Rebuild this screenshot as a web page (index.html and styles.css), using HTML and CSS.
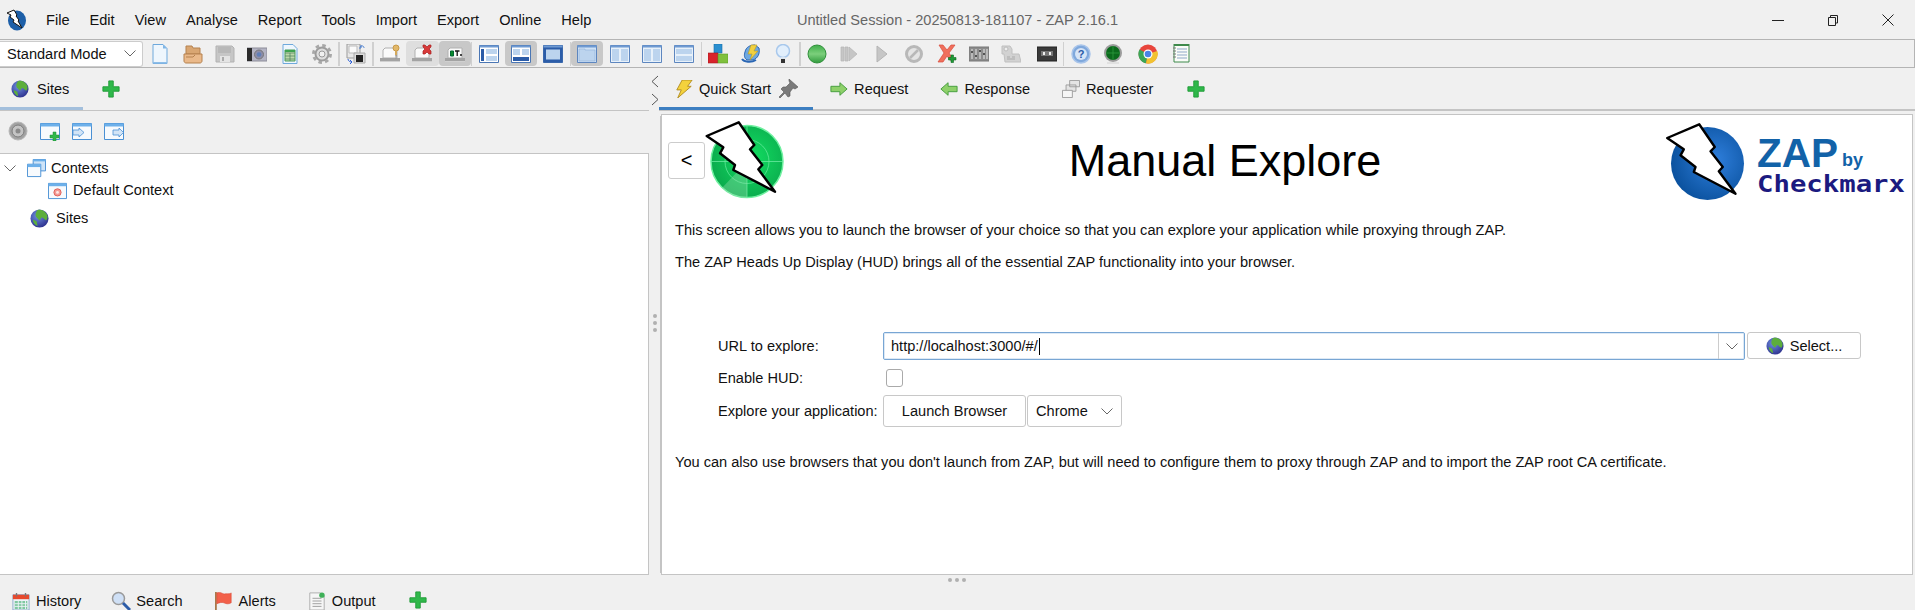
FILE: index.html
```html
<!DOCTYPE html>
<html lang="en">
<head>
    <meta charset="UTF-8">
    <title>Untitled Session - 20250813-181107 - ZAP 2.16.1</title>
    <link rel="stylesheet" href="styles.css">
</head>
<body>
    <!-- icon sprite, everything below points at these with <use> -->
    <svg class="sprites" xmlns="http://www.w3.org/2000/svg">
        <defs>
            <radialGradient id="g-globe" cx="40%" cy="35%" r="70%"><stop offset="0" stop-color="#6f8fe0"/><stop offset="1" stop-color="#2c2f8c"/></radialGradient>
            <radialGradient id="g-radar" cx="55%" cy="45%" r="60%"><stop offset="0" stop-color="#12df62"/><stop offset="1" stop-color="#0aa84c"/></radialGradient>
            <radialGradient id="g-zap" cx="60%" cy="45%" r="60%"><stop offset="0" stop-color="#2f7fdc"/><stop offset="1" stop-color="#0b529f"/></radialGradient>
            <linearGradient id="g-green" x1="0" y1="0" x2="0" y2="1"><stop offset="0" stop-color="#3fae4a"/><stop offset=".5" stop-color="#7ccf7c"/><stop offset="1" stop-color="#2f9a3c"/></linearGradient>
        </defs>
        <symbol id="plus" viewBox="0 0 20 20"><path d="M7.500 1h5v6.500H19v5h-6.500V19h-5v-6.500H1v-5h6.500z" fill="#2fb84a" stroke="#1f9a38"/></symbol>
        <symbol id="globe" viewBox="0 0 20 20"><circle cx="10" cy="10" r="9.500" fill="url(#g-globe)"/><path d="M8 1c4-1 8 1 10 5 1 3 0 5-1 6-2-1-3-3-5-3l-2 3-3-3C5 7 6 3 8 1zM3 11l4 2 1 5c-3-1-5-4-5-7z" fill="#5cae3c"/></symbol>
        <symbol id="new" viewBox="0 0 20 20"><path d="M3 .5h10l4 4v15H3z" fill="#eef6fd" stroke="#6ea9dc"/><path d="M13 .5v4h4z" fill="#7fb6e6"/><path d="M3 18h14v1.500H3z" fill="#8dbde8"/></symbol>
        <symbol id="open" viewBox="0 0 20 20"><path d="M3 2h6l1 2h7v6H3z" fill="#d9a672" stroke="#b5814e"/><path d="M1 10h18v7c0 1-1 2-2 2H3c-1 0-2-1-2-2z" fill="#eab98a" stroke="#b5814e"/><path d="M3 13h7l2-2" fill="none" stroke="#b5814e"/></symbol>
        <symbol id="save" viewBox="0 0 20 20"><path d="M1 2h16l2 2v14H1z" fill="#c6c6c6" stroke="#b2b2b2"/><path d="M3 3h13v6H3z" fill="#b8b8b8"/><path d="M5 12h10v6H5z" fill="#e4e4e4"/><path d="M7 13h2v4H7z" fill="#aaa"/></symbol>
        <symbol id="camera" viewBox="0 0 20 20"><path d="M0 4h20v13H0z" fill="#b4b4c4" stroke="#8c8c98"/><path d="M0 4h5v13H0z" fill="#2b2b2b"/><circle cx="12" cy="10.500" r="4.500" fill="#8c8ca8" stroke="#777"/><circle cx="12" cy="10.500" r="2.300" fill="#5f7fb8"/></symbol>
        <symbol id="report" viewBox="0 0 20 20"><path d="M3 .5h10l4 4v15H3z" fill="#eef6fd" stroke="#6ea9dc"/><path d="M5 6h10v11H5z" fill="#bcd8a8" stroke="#4a9c5c"/><path d="M5 9h10M5 12h10M5 15h10M10 9v8" stroke="#4a7f5c" fill="none" stroke-width=".7"/><path d="M5 6h10v2H5z" fill="#3ea34f"/></symbol>
        <symbol id="gear" viewBox="0 0 20 20"><circle cx="10" cy="10" r="6.500" fill="#dedede" stroke="#9c9c9c" stroke-width="2"/><circle cx="10" cy="10" r="8.500" fill="none" stroke="#a8a8a8" stroke-width="3" stroke-dasharray="3.500 3.170"/><circle cx="10" cy="10" r="3" fill="#f0f0f0" stroke="#999"/></symbol>
        <symbol id="session" viewBox="0 0 20 20"><path d="M1 0h13v14H1z" fill="#e8e8e8" stroke="#9a9a9a"/><path d="M3 2h8v7H3z" fill="#fafafa" stroke="#bbb"/><path d="M8 9h11v10H8z" fill="#ddd" stroke="#aaa"/><path d="M10 11h7v7h-7z" fill="#222"/><path d="M14 3c2-2 4-1 4 1M15 1v3h-2" fill="none" stroke="#4a7fd0"/><path d="M2 15c0 2 2 3 4 3M4 16l2 2-2 2" fill="none" stroke="#2f62d8"/></symbol>
        <symbol id="laptop" viewBox="0 0 20 20"><path d="M3 6l2-2h12v10H3z" fill="#fafafa" stroke="#b0b0b0"/><path d="M0 14h20v3H0z" fill="#a3a3a3"/><path d="M0 17h20v1H0z" fill="#d0d0d0"/></symbol>
        <symbol id="pin" viewBox="0 0 20 20"><use href="#laptop"/><circle cx="16" cy="4" r="3" fill="#e2b86a" stroke="#c89a48"/><path d="M15 6h2v5h-2z" fill="#d4a95c"/><path d="M15.500 11h1l-.5 4z" fill="#555"/></symbol>
        <symbol id="laptop-x" viewBox="0 0 20 20"><use href="#laptop"/><path d="M11 1h2l2 2 2-2h2v2l-2 2 2 2v3h-2l-2-2-2 2h-2V7l2-2-2-2z" fill="#d83a3a" stroke="#a81f1f" stroke-width=".7"/></symbol>
        <symbol id="laptop-t" viewBox="0 0 20 20"><use href="#laptop"/><path d="M5.500 7h3v5h-3z" fill="#0a8a2a" stroke="#063"/><path d="M10 7h4.500M12.200 7v5M15 11h2" stroke="#111" stroke-width="1.300" fill="none"/></symbol>
        <symbol id="lay-a" viewBox="0 0 20 20"><path d="M.5 1.500h19v17H.5z" fill="#fff" stroke="#4a76b4"/><path d="M.5 1.500h19v2H.5z" fill="#6f9ad2"/><path d="M2 5h3v12H2z" fill="#2b5ca8"/><path d="M7 5h11v5H7zM7 12h11v5H7z" fill="#bcd4ee"/></symbol>
        <symbol id="lay-b" viewBox="0 0 20 20"><path d="M.5 1.500h19v17H.5z" fill="#fff" stroke="#4a76b4"/><path d="M.5 1.500h19v2H.5z" fill="#6f9ad2"/><path d="M2 5h7v6H2zM11 5h7v6h-7z" fill="#bcd4ee"/><path d="M2 13h16v4H2z" fill="#2b5ca8"/></symbol>
        <symbol id="lay-c" viewBox="0 0 20 20"><path d="M.5 1.500h19v17H.5z" fill="#2b5ca8" stroke="#3a68ac"/><path d="M.5 1.500h19v2H.5z" fill="#6f9ad2"/><path d="M3 5.500h14v10H3z" fill="#bcd4ee"/></symbol>
        <symbol id="lay-d" viewBox="0 0 20 20"><path d="M.5 1.500h19v17H.5z" fill="#cfe2f6" stroke="#5d86bf"/><path d="M.5 1.500h19v2H.5z" fill="#6f9ad2"/><path d="M2 5h6v1h10v11H2z" fill="#bcd4ee" stroke="#8fb0d8" stroke-width=".6"/></symbol>
        <symbol id="lay-e" viewBox="0 0 20 20"><path d="M.5 1.500h19v17H.5z" fill="#e8f1fa" stroke="#5d86bf"/><path d="M.5 1.500h19v2H.5z" fill="#6f9ad2"/><path d="M2 5h7v12H2zM11 5h7v12h-7z" fill="#bcd4ee"/></symbol>
        <symbol id="lay-f" viewBox="0 0 20 20"><path d="M.5 1.500h19v17H.5z" fill="#e8f1fa" stroke="#5d86bf"/><path d="M.5 1.500h19v2H.5z" fill="#6f9ad2"/><path d="M2 5h16v5H2zM2 12h16v5H2z" fill="#bcd4ee"/></symbol>
        <symbol id="blocks" viewBox="0 0 20 20"><path d="M6 0h8v9H6z" fill="#2a8fd0" stroke="#1a70a8" stroke-width=".6"/><path d="M0 9h10v10H0z" fill="#d8242c" stroke="#a81a20" stroke-width=".6"/><path d="M10 10h10v9H10z" fill="#7fc03c" stroke="#5c9a28" stroke-width=".6"/></symbol>
        <symbol id="sync" viewBox="0 0 20 20"><path d="M4 8C5 3 9 1 14 1l4 3c1 6-1 10-6 12H6C3 14 3 11 4 8z" fill="#6ea8e0" stroke="#2a66b4"/><path d="M10 1h6l-3 6h4l-8 9 2-6H7z" fill="#f0d040" stroke="#b89a20" stroke-width=".6"/><path d="M1 15c2 3 9 4 14 1" fill="none" stroke="#2a66b4" stroke-width="2"/></symbol>
        <symbol id="bulb" viewBox="0 0 20 20"><circle cx="10" cy="7" r="6.500" fill="#e2effc" stroke="#a8c8ec" stroke-width="1.500"/><path d="M7.500 13h5v2h-5z" fill="#dbe6f2"/><path d="M8 15h4v4H8z" fill="#333"/></symbol>
        <symbol id="ball" viewBox="0 0 20 20"><circle cx="10" cy="10" r="9" fill="url(#g-green)" stroke="#2f8f3a"/></symbol>
        <symbol id="step" viewBox="0 0 20 20"><path d="M2 3h3v14H2zM6 3h3v14H6z" fill="#c6c6c6" stroke="#b4b4b4" stroke-width=".7"/><path d="M10 3l8 7-8 7z" fill="#c6c6c6" stroke="#b4b4b4" stroke-width=".7"/></symbol>
        <symbol id="play" viewBox="0 0 20 20"><path d="M5 2l10 8-10 8z" fill="#c6c6c6" stroke="#b4b4b4"/></symbol>
        <symbol id="stop" viewBox="0 0 20 20"><circle cx="10" cy="10" r="7.500" fill="#e4e4e4" stroke="#b8b8b8" stroke-width="3"/><path d="M6 14l8-8" stroke="#b8b8b8" stroke-width="2.500"/></symbol>
        <symbol id="x-plus" viewBox="0 0 20 20"><path d="M2 1h4l4 5 4-5h4l-6 8 5 7h-4l-3-4-4 6H1l6-9z" fill="#f0705c" stroke="#d84a3c" stroke-width=".7"/><path d="M14 11h2.500v2.500H19V16h-2.500v2.500H14V16h-2.500v-2.500H14z" fill="#1f9a38" stroke="#0f6a20" stroke-width=".6"/></symbol>
        <symbol id="meter" viewBox="0 0 20 20"><path d="M0 3h20v14H0z" fill="#8c8c8c" stroke="#777"/><path d="M3 5v10M7 5v10M11 5v10M15 5v10M18 5v10" stroke="#e8e8e8"/><path d="M2 8h2M6 12h2M10 7h2M14 10h2" stroke="#333" stroke-width="1.500"/></symbol>
        <symbol id="tag" viewBox="0 0 20 20"><path d="M1 2h8l2 3v5h7l2 8H4l-1-8H1z" fill="#d2d2d2" stroke="#c0c0c0"/><circle cx="5" cy="5" r="2" fill="#eee" stroke="#bbb"/><path d="M6 13h3M11 13h3M6 15h8" stroke="#aaa"/></symbol>
        <symbol id="tape" viewBox="0 0 20 20"><path d="M0 3h20v14H0z" fill="#3a3a3a" stroke="#222"/><path d="M4 7h12v5H4z" fill="#777"/><path d="M6 8h2v3H6zM12 8h2v3h-2z" fill="#eee"/></symbol>
        <symbol id="help" viewBox="0 0 20 20"><circle cx="10" cy="10" r="9" fill="#7fa8dc" stroke="#a8c4ea" stroke-width="1.500"/><circle cx="10" cy="10" r="6" fill="#d6e4f6"/></symbol>
        <symbol id="radar-sm" viewBox="0 0 20 20"><circle cx="10" cy="9" r="9" fill="#9c9c9c"/><circle cx="10" cy="9" r="7" fill="#0b6a1c"/><path d="M3 9h14M10 2v14" stroke="#2f9a40" stroke-width=".8"/><path d="M4 19h12" stroke="#ddd" stroke-width="1.500"/></symbol>
        <symbol id="chrome" viewBox="0 0 20 20"><circle cx="10" cy="10" r="9.500" fill="#e8453c"/><path d="M10 10L1.500 5.500A9.500 9.500 0 0 0 8 19.300z" fill="#3aa757"/><path d="M10 10l9.300-3A9.500 9.500 0 0 1 8 19.300z" fill="#f2c230"/><circle cx="10" cy="10" r="4.500" fill="#fff"/><circle cx="10" cy="10" r="3.300" fill="#4a84e8"/></symbol>
        <symbol id="book" viewBox="0 0 20 20"><path d="M3 0h15v18H3z" fill="#fafcf8" stroke="#3f8a4c"/><path d="M3 0h15v2H3z" fill="#3f8a4c"/><path d="M6 5h10M6 8h10M6 11h10M6 14h10" stroke="#8fa8c8"/><path d="M2 4h3M2 7h3M2 10h3M2 13h3" stroke="#777"/></symbol>
        <symbol id="target" viewBox="0 0 20 20"><circle cx="10" cy="10" r="9" fill="#a2a2a2" stroke="#b8b8b8"/><circle cx="10" cy="10" r="6" fill="#c4c4c4" stroke="#7c7c7c"/><circle cx="10" cy="10" r="2.500" fill="#8a8a8a"/></symbol>
        <symbol id="win" viewBox="0 0 20 20"><path d="M.5 2.500h19v16H.5z" fill="#f7fafd" stroke="#4a90d4"/><path d="M.5 2.500h19v3H.5z" fill="#6db0ea"/></symbol>
        <symbol id="win-add" viewBox="0 0 20 20"><use href="#win"/><path d="M13 11h3v3h3v3h-3v3h-3v-3h-3v-3h3z" fill="#2fb84a" stroke="#1f8a38" stroke-width=".5"/></symbol>
        <symbol id="win-in" viewBox="0 0 20 20"><use href="#win"/><path d="M1 9h6V7l5 4.500L7 16v-2H1z" fill="#d2e4f6" stroke="#4a90d4" stroke-width=".8"/></symbol>
        <symbol id="win-out" viewBox="0 0 20 20"><use href="#win"/><path d="M9 9h6V7l4.500 4.500L15 16v-2H9z" fill="#d2e4f6" stroke="#4a90d4" stroke-width=".8"/></symbol>
        <symbol id="wins" viewBox="0 0 20 20"><path d="M6.500.5h13v12h-13z" fill="#cfe4f8" stroke="#4a90d4"/><path d="M6.500.5h13v2h-13z" fill="#6db0ea"/><path d="M.5 5.500h14v13H.5z" fill="#f7fafd" stroke="#4a90d4"/><path d="M.5 5.500h14v3H.5z" fill="#6db0ea"/></symbol>
        <symbol id="ctx" viewBox="0 0 20 20"><use href="#win"/><circle cx="10" cy="12" r="3.800" fill="#f29a94" stroke="#e0605a"/><circle cx="10" cy="12" r="1.500" fill="#fde8e6"/></symbol>
        <symbol id="bolt-sm" viewBox="0 0 20 20"><path d="M8 0h11l-5 7h4L3 20l4-9H2z" fill="#f4d23c" stroke="#b08a1c"/></symbol>
        <symbol id="pin-tab" viewBox="0 0 20 20"><path d="M11 0l9 8-3 2-2-1-3 4 0 4-2 1-3-4-5 5-1-1 5-5-3-3 2-2h3l4-4-1-2z" fill="#7a7a7a" stroke="#555" stroke-width=".6"/></symbol>
        <symbol id="arrow-r" viewBox="0 0 20 20"><path d="M1 7h10V3l8 7-8 7v-4H1z" fill="#8ed06a" stroke="#3f9a3a"/></symbol>
        <symbol id="arrow-l" viewBox="0 0 20 20"><path d="M19 7H9V3l-8 7 8 7v-4h10z" fill="#8ed06a" stroke="#3f9a3a"/></symbol>
        <symbol id="reqs" viewBox="0 0 20 20"><path d="M8.500.5h11v7h-11zM4.500 5.500h11v7h-11z" fill="#e4e4e4" stroke="#999"/><path d="M.5 11.500h11v8H.5z" fill="#f6f6f6" stroke="#999"/></symbol>
        <symbol id="history" viewBox="0 0 20 20"><path d="M1 3h18v17H1z" fill="#eef3f8" stroke="#8aa8c8"/><path d="M1 3h18v5H1z" fill="#e8492c"/><path d="M5 1v4M15 1v4" stroke="#777" stroke-width="1.500"/><path d="M3 10h14v9H3z" fill="#7fc8a0"/><path d="M3 13h14M3 16h14M7 10v9M11 10v9M15 10v9" stroke="#eef3f8"/></symbol>
        <symbol id="search" viewBox="0 0 20 20"><circle cx="7.500" cy="7.500" r="6" fill="#cfe0f6" stroke="#9a9a9a" stroke-width="1.500"/><path d="M12 12l7 7" stroke="#2b5ca8" stroke-width="3"/></symbol>
        <symbol id="flag" viewBox="0 0 20 20"><path d="M1 0v20" stroke="#a8784a" stroke-width="2"/><path d="M2 1c5-2 6 2 10 1 3 0 5 0 6-1v11c-3 2-6 1-8 0-3-1-5 0-8 1z" fill="#f2604a" stroke="#d8422c" stroke-width=".6"/></symbol>
        <symbol id="output" viewBox="0 0 20 20"><path d="M2 1h12l4 4v15H2z" fill="#f6f6f6" stroke="#aaa"/><path d="M5 7h10M5 10h10M5 13h10M5 16h10" stroke="#999"/><circle cx="15.500" cy="3.500" r="3" fill="#3fb058"/></symbol>
        <symbol id="bolt" viewBox="0 0 90 90"><path d="M6.700 18L38.700 4.300 54.300 27 50 31.300 62.300 47 58.300 51.300 75 73.700 33.300 52 35 47 20 35.300 23.300 29.300z" fill="#fff" stroke="#000" stroke-width="2.400" stroke-linejoin="round"/></symbol>
    </svg>

    <div class="titlebar">
        <div class="menubar">
            <svg class="app-logo" viewBox="0 0 20 22"><ellipse cx="11" cy="11.500" rx="9" ry="10" fill="#1d5fa8"/><path d="M1 4l7-3 3 5-1 1 3 4-1 1 4 7-9-6 1-2-4-3 1-2z" fill="#fff" stroke="#111"/></svg>
            <span>File</span><span>Edit</span><span>View</span><span>Analyse</span><span>Report</span><span>Tools</span><span>Import</span><span>Export</span><span>Online</span><span>Help</span>
        </div>
        <div class="app-title">Untitled Session - 20250813-181107 - ZAP 2.16.1</div>
        <div class="win-buttons">
            <span class="win-btn"><svg viewBox="0 0 12 12"><path d="M0 6.500h12" stroke="#222" fill="none"/></svg></span>
            <span class="win-btn"><svg viewBox="0 0 12 12"><path d="M1.500 3.500h7v8h-7zM3.500 3V1.500h7V9H9" stroke="#222" fill="none"/></svg></span>
            <span class="win-btn"><svg viewBox="0 0 12 12"><path d="M.5.500l11 11M11.500.500l-11 11" stroke="#222" fill="none"/></svg></span>
        </div>
    </div>

    <div class="toolbar">
        <div class="mode-select">Standard Mode <svg class="chev" viewBox="0 0 12 7"><path d="M.5.500L6 6 11.500.500" /></svg></div>
        <span class="tb"><svg><use href="#new"/></svg></span>
        <span class="tb"><svg><use href="#open"/></svg></span>
        <span class="tb"><svg><use href="#save"/></svg></span>
        <span class="tb"><svg><use href="#camera"/></svg></span>
        <span class="tb"><svg><use href="#report"/></svg></span>
        <span class="tb"><svg><use href="#gear"/></svg></span>
        <i class="sep"></i>
        <span class="tb"><svg><use href="#session"/></svg></span>
        <i class="sep"></i>
        <span class="tb"><svg><use href="#pin"/></svg></span>
        <span class="tb on-light"><svg><use href="#laptop-x"/></svg></span>
        <span class="tb on"><svg><use href="#laptop-t"/></svg></span>
        <i class="sep"></i>
        <span class="tb"><svg><use href="#lay-a"/></svg></span>
        <span class="tb on"><svg><use href="#lay-b"/></svg></span>
        <span class="tb"><svg><use href="#lay-c"/></svg></span>
        <i class="sep"></i>
        <span class="tb on"><svg><use href="#lay-d"/></svg></span>
        <span class="tb"><svg><use href="#lay-e"/></svg></span>
        <span class="tb"><svg><use href="#lay-e"/></svg></span>
        <span class="tb"><svg><use href="#lay-f"/></svg></span>
        <i class="sep"></i>
        <span class="tb"><svg><use href="#blocks"/></svg></span>
        <span class="tb"><svg><use href="#sync"/></svg></span>
        <span class="tb"><svg><use href="#bulb"/></svg></span>
        <i class="sep"></i>
        <span class="tb"><svg><use href="#ball"/></svg></span>
        <span class="tb"><svg><use href="#step"/></svg></span>
        <span class="tb"><svg><use href="#play"/></svg></span>
        <span class="tb"><svg><use href="#stop"/></svg></span>
        <span class="tb"><svg><use href="#x-plus"/></svg></span>
        <span class="tb"><svg><use href="#meter"/></svg></span>
        <span class="tb"><svg><use href="#tag"/></svg></span>
        <span class="tb nudge"><svg><use href="#tape"/></svg></span>
        <i class="sep"></i>
        <span class="tb"><svg viewBox="0 0 20 20"><use href="#help" width="20" height="20"/><text x="10" y="14" class="help-mark">?</text></svg></span>
        <span class="tb"><svg><use href="#radar-sm"/></svg></span>
        <span class="tb nudge"><svg><use href="#chrome"/></svg></span>
        <span class="tb"><svg><use href="#book"/></svg></span>
    </div>

    <div class="main">
        <div class="left-panel">
            <div class="tabbar">
                <div class="tab sites-tab selected-soft"><svg><use href="#globe"/></svg>Sites</div>
                <svg class="add-tab"><use href="#plus"/></svg>
            </div>
            <div class="site-tools">
                <svg><use href="#target"/></svg>
                <svg><use href="#win-add"/></svg>
                <svg><use href="#win-in"/></svg>
                <svg><use href="#win-out"/></svg>
            </div>
            <div class="tree">
                <div class="tree-row">
                    <svg class="chev" viewBox="0 0 12 7"><path d="M.5.500L6 6 11.500.500" /></svg>
                    <svg class="tree-icon"><use href="#wins"/></svg>
                    Contexts
                </div>
                <div class="tree-row depth-1"><svg class="tree-icon"><use href="#ctx"/></svg>Default Context</div>
                <div class="tree-row root-sites"><svg class="tree-icon"><use href="#globe"/></svg>Sites</div>
            </div>
        </div>

        <div class="splitter">
            <svg class="collapse" viewBox="0 0 8 31"><path d="M7 1L1 6.500l6 5.500M1 19l6 5.500-6 5.500" fill="none" stroke="#555"/></svg>
            <div class="dots"><b></b><b></b><b></b></div>
        </div>

        <div class="right-panel">
            <div class="tabbar">
                <div class="tab selected"><svg><use href="#bolt-sm"/></svg>Quick Start<svg class="tab-pin"><use href="#pin-tab"/></svg></div>
                <div class="tab"><svg><use href="#arrow-r"/></svg>Request</div>
                <div class="tab"><svg><use href="#arrow-l"/></svg>Response</div>
                <div class="tab"><svg><use href="#reqs"/></svg>Requester</div>
                <svg class="add-tab"><use href="#plus"/></svg>
            </div>
            <div class="content">
                <div class="explore-head">
                    <button class="back-btn">&lt;</button>
                    <svg class="radar" viewBox="5 0 85 88">
                        <circle cx="47" cy="43.500" r="36" fill="url(#g-radar)" stroke="#6ff0a0" stroke-width="1.500"/>
                        <circle cx="47" cy="43.500" r="22" fill="none" stroke="#5fe898" stroke-width=".8"/>
                        <path d="M11 43.500h72M47 8v72" stroke="#6aeaa0" stroke-width=".8"/>
                        <path d="M47 43.500L22 70c8 8 18 10 25 10z" fill="#8fdcaa" opacity=".4"/>
                        <use href="#bolt" width="90" height="90"/>
                    </svg>
                    <h1>Manual Explore</h1>
                    <svg class="zap-logo" viewBox="0 0 252 90">
                        <circle cx="47.500" cy="45.500" r="36.500" fill="url(#g-zap)"/>
                        <use href="#bolt" x=".500" y="2" width="90" height="90"/>
                        <text x="97" y="49" class="zap-word" textLength="81" lengthAdjust="spacingAndGlyphs">ZAP</text>
                        <text x="182" y="48" class="zap-by" textLength="21" lengthAdjust="spacingAndGlyphs">by</text>
                        <text x="97" y="74" class="zap-cx" textLength="148" lengthAdjust="spacingAndGlyphs">Checkmarx</text>
                    </svg>
                </div>
                <p class="line-1">This screen allows you to launch the browser of your choice so that you can explore your application while proxying through ZAP.</p>
                <p class="line-2">The ZAP Heads Up Display (HUD) brings all of the essential ZAP functionality into your browser.</p>
                <div class="explore-form">
                    <label>URL to explore:</label>
                    <div class="url-row">
                        <div class="url-input"><span class="url-text">http://localhost:3000/#/</span><span class="url-drop"><svg class="chev" viewBox="0 0 12 7"><path d="M.5.500L6 6 11.500.500" /></svg></span></div>
                        <button class="select-btn"><svg><use href="#globe"/></svg>Select...</button>
                    </div>
                    <label>Enable HUD:</label>
                    <div><span class="checkbox"></span></div>
                    <label>Explore your application:</label>
                    <div class="launch-row">
                        <button class="launch-btn">Launch Browser</button>
                        <div class="browser-select">Chrome<svg class="chev" viewBox="0 0 12 7"><path d="M.5.500L6 6 11.500.500" /></svg></div>
                    </div>
                </div>
                <p class="line-3">You can also use browsers that you don't launch from ZAP, but will need to configure them to proxy through ZAP and to import the ZAP root CA certificate.</p>
            </div>
        </div>
    </div>

    <div class="bottom-tabs">
        <div class="tab history-tab"><svg><use href="#history"/></svg>History</div>
        <div class="tab search-tab"><svg><use href="#search"/></svg>Search</div>
        <div class="tab"><svg><use href="#flag"/></svg>Alerts</div>
        <div class="tab"><svg><use href="#output"/></svg>Output</div>
        <svg class="add-tab"><use href="#plus"/></svg>
        <div class="dots flat"><b></b><b></b><b></b></div>
    </div>
</body>
</html>
```

FILE: styles.css
```css
/* ZAP desktop window */
* {
    box-sizing: border-box;
}

body {
    margin: 0;
    width: 1915px;
    height: 610px;
    overflow: hidden;
    display: flex;
    flex-direction: column;
    background: #f0f0f0;
    color: #111;
    font-family: "Liberation Sans", Arial, sans-serif;
    font-size: 14.58px;
}

svg {
    display: block;
    flex: none;
}

.sprites {
    width: 0;
    height: 0;
}

.chev {
    width: 12px;
    height: 7px;
    fill: none;
    stroke: #666;
}

/* Title bar */
.titlebar {
    height: 39px;
    display: grid;
    grid-template-columns: 1fr auto 1fr;
    align-items: center;
    flex: none;
}

.menubar {
    display: flex;
    align-items: center;
    gap: 20px;
    padding-left: 6px;
}

.app-logo {
    width: 20px;
    height: 22px;
}

.app-title {
    color: #666;
}

.win-buttons {
    display: flex;
    justify-content: flex-end;
}

.win-btn {
    width: 55px;
    display: flex;
    justify-content: center;
}

.win-btn svg {
    width: 12px;
    height: 12px;
}

/* Main toolbar */
.toolbar {
    height: 29px;
    flex: none;
    display: flex;
    align-items: center;
    border-top: 1px solid #b4b4b4;
    border-bottom: 1px solid #b4b4b4;
    border-right: 1px solid #b4b4b4;
}

.mode-select {
    width: 143px;
    height: 26px;
    margin-right: 1px;
    padding: 0 6px 0 7px;
    display: flex;
    align-items: center;
    justify-content: space-between;
    background: #fff;
    border: 1px solid #ccc;
    border-left: 0;
    border-radius: 0 3px 3px 0;
}

.tb {
    width: 32.400px;
    height: 25px;
    flex: none;
    display: flex;
    align-items: center;
    justify-content: center;
    border-radius: 4px;
}

.tb svg {
    width: 20px;
    height: 20px;
}

.tb.on {
    background: #c8c8c8;
}

.tb.on-light {
    background: #dedede;
}

.tb.nudge {
    margin-left: 3px;
}

.help-mark {
    font: bold 11px "Liberation Sans", sans-serif;
    text-anchor: middle;
    fill: #2b5ca8;
}

.sep {
    width: 1.500px;
    height: 24px;
    flex: none;
    background: #d0d0d0;
}

/* Panels */
.main {
    height: 507px;
    flex: none;
    display: flex;
}

.left-panel {
    width: 649px;
    flex: none;
    display: flex;
    flex-direction: column;
}

.tabbar {
    height: 43px;
    flex: none;
    display: flex;
    align-items: center;
    border-bottom: 1px solid #c4c4c4;
}

.tab {
    height: 42px;
    display: flex;
    align-items: center;
    gap: 6px;
    padding: 0 15px 0 17px;
}

.tab svg {
    width: 18px;
    height: 18px;
}

.sites-tab {
    width: 83px;
    padding-left: 11px;
    gap: 8px;
}

.selected-soft {
    border-bottom: 3px solid #a3bfdc;
    padding-top: 3px;
}

.selected {
    border-bottom: 3px solid #3d7fc1;
    padding-top: 3px;
    padding-left: 16px;
}

.tab svg.tab-pin {
    width: 20px;
    height: 20px;
    margin-left: 1px;
}

.add-tab {
    width: 18px;
    height: 18px;
    margin-left: 19px;
}

.site-tools {
    height: 43px;
    flex: none;
    display: flex;
    align-items: center;
    gap: 12px;
    padding: 0 0 2px 8px;
    border-bottom: 1px solid #c4c4c4;
}

.site-tools svg {
    width: 20px;
    height: 20px;
}

.tree {
    flex: 1;
    padding-top: 3px;
    background: #fff;
    border-right: 1px solid #c4c4c4;
    border-bottom: 1px solid #c4c4c4;
}

.tree-row {
    height: 22px;
    display: flex;
    align-items: center;
    padding-left: 4px;
}

.tree-icon {
    width: 19px;
    height: 19px;
    margin: 0 5px 0 11px;
}

.depth-1 {
    padding-left: 37px;
}

.depth-1 .tree-icon {
    margin-right: 6px;
}

.root-sites {
    margin-top: 6px;
    padding-left: 19px;
}

.root-sites .tree-icon {
    margin-right: 7px;
}

.splitter {
    width: 10px;
    flex: none;
    position: relative;
}

.collapse {
    width: 8px;
    height: 31px;
    margin: 7px 0 0 2px;
}

.dots {
    position: absolute;
    top: 246px;
    left: 4px;
    display: flex;
    flex-direction: column;
    gap: 3px;
}

.dots b {
    width: 4px;
    height: 4px;
    border-radius: 50%;
    background: #b0b0b0;
}

.dots.flat {
    top: 3px;
    left: 948px;
    flex-direction: row;
}

/* Quick Start tab */
.right-panel {
    flex: 1;
    display: flex;
    flex-direction: column;
    min-width: 0;
    padding-right: 2px;
}

.right-panel .tabbar {
    border-bottom-width: 2px;
    margin-right: -2px;
}

.content {
    flex: 1;
    margin: 3px 0 0 2px;
    background: #fff;
    border: 1px solid #c4c4c4;
    box-shadow: -3px 0 0 -2px #c4c4c4;
}

.explore-head {
    height: 107px;
    display: flex;
    align-items: flex-start;
    padding: 3px 0 0 6px;
}

.back-btn {
    width: 37px;
    height: 37px;
    margin-top: 24px;
    padding: 0;
    background: #fff;
    border: 1px solid #ccc;
    border-radius: 3px;
    font: inherit;
    font-size: 20px;
}

.radar {
    width: 85px;
    height: 88px;
}

h1 {
    flex: 1;
    margin: 15px 0 0;
    font-size: 45px;
    line-height: 56px;
    font-weight: normal;
    text-align: center;
    color: #000;
}

.zap-logo {
    width: 252px;
    height: 90px;
}

.zap-word {
    font: bold 40px "Liberation Sans", sans-serif;
    fill: #1262a8;
}

.zap-by {
    font: bold 18px "Liberation Sans", sans-serif;
    fill: #1262a8;
}

.zap-cx {
    font: bold 23.500px "DejaVu Sans Mono", monospace;
    fill: #1b1a80;
}

p {
    margin: 0;
    padding-left: 13px;
    line-height: 17px;
}

.line-2 {
    margin-top: 15px;
}

.explore-form {
    display: grid;
    grid-template-columns: 165px 1fr;
    grid-template-rows: 28px 19px 32px;
    row-gap: 8px;
    align-items: center;
    margin-top: 61px;
    padding: 0 51px 0 56px;
}

.url-row {
    display: flex;
    gap: 2px;
    height: 28px;
}

.url-input {
    flex: 1;
    display: flex;
    justify-content: space-between;
    border: 1px solid #78a6d4;
    border-radius: 2px;
    box-shadow: inset 0 0 0 1px #dde9f5;
}

.url-text {
    align-self: center;
    padding-left: 7px;
}

.url-text::after {
    content: "";
    display: inline-block;
    width: 1px;
    height: 17px;
    margin-left: 1px;
    vertical-align: -4px;
    background: #000;
}

.url-drop {
    width: 26px;
    display: flex;
    align-items: center;
    justify-content: center;
    border-left: 1px solid #ccc;
}

.select-btn,
.launch-btn {
    display: flex;
    align-items: center;
    justify-content: center;
    gap: 6px;
    background: #fff;
    border: 1px solid #c8c8c8;
    border-radius: 3px;
    font: inherit;
    color: inherit;
    padding: 0;
}

.select-btn {
    width: 114px;
    height: 27px;
}

.select-btn svg {
    width: 18px;
    height: 18px;
}

.checkbox {
    display: block;
    width: 17px;
    height: 18px;
    margin-left: 3px;
    background: #fff;
    border: 1px solid #aaa;
    border-radius: 3px;
}

.launch-row {
    display: flex;
    gap: 1px;
}

.launch-btn {
    width: 143px;
    height: 32px;
}

.browser-select {
    width: 95px;
    height: 32px;
    padding: 0 8px;
    display: flex;
    align-items: center;
    justify-content: space-between;
    background: #fff;
    border: 1px solid #c8c8c8;
    border-radius: 3px;
}

.line-3 {
    margin-top: 27px;
}

/* Bottom dock tabs */
.bottom-tabs {
    height: 35px;
    flex: none;
    display: flex;
    align-items: flex-start;
    gap: 32px;
    padding: 16px 0 0 12px;
    position: relative;
}

.bottom-tabs .tab {
    height: 20px;
    padding: 0;
}

.bottom-tabs .history-tab {
    margin-right: -2px;
}

.bottom-tabs .search-tab {
    gap: 5px;
}

.bottom-tabs .search-tab svg {
    width: 20px;
    height: 20px;
}

.bottom-tabs .add-tab {
    margin: 0 0 0 1px;
}
```
